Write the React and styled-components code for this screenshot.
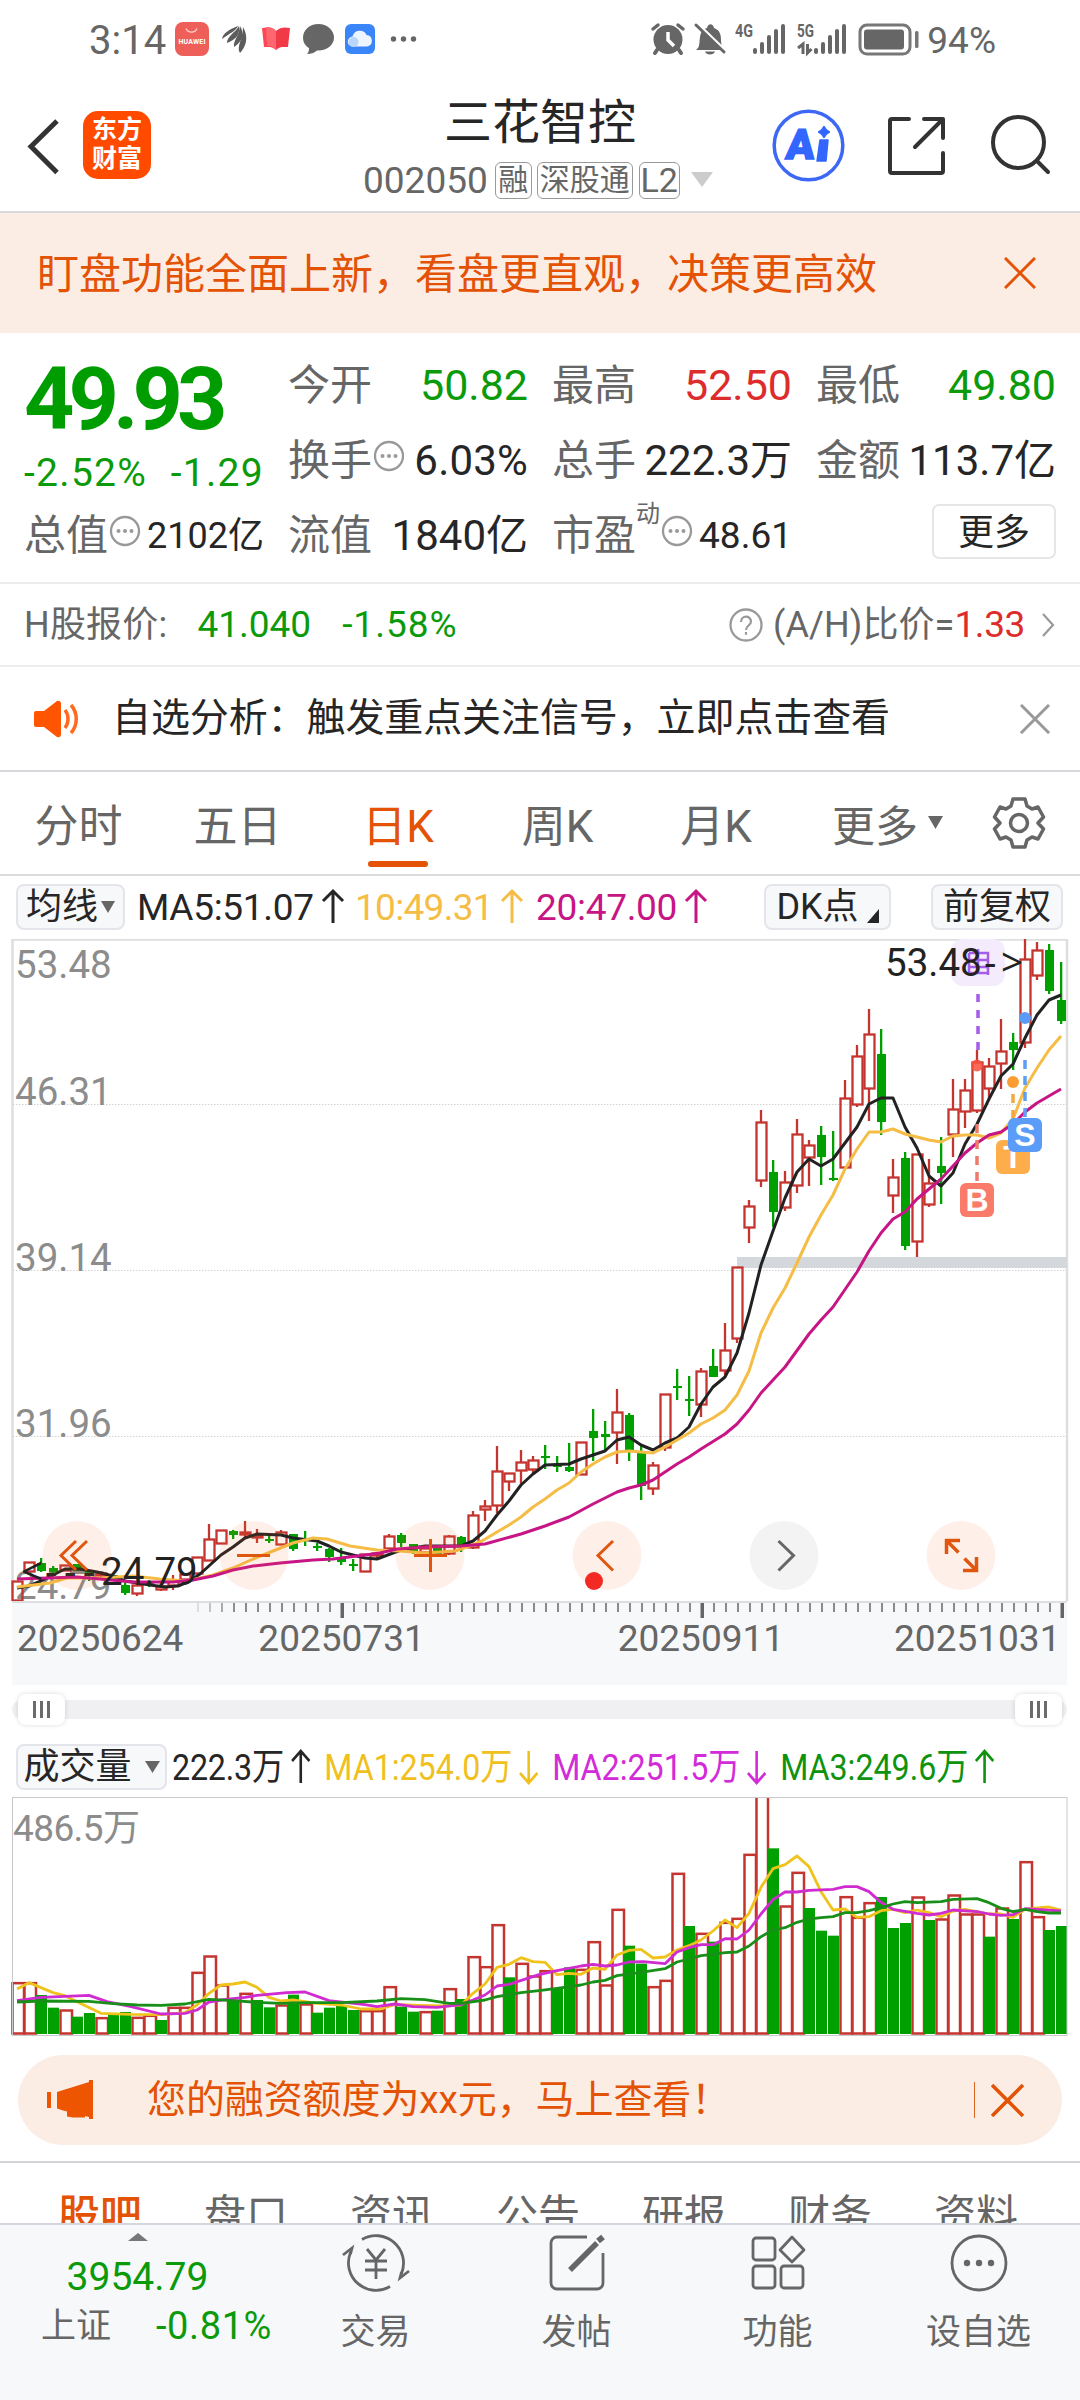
import React from 'react';
import styled, { createGlobalStyle } from 'styled-components';

const colors = {
  up: '#dd2c2c',
  down: '#0a9a0a',
  brand: '#e35205',
  text: '#262626',
  label: '#666666',
  muted: '#8c8c8c'
};

const GlobalStyle = createGlobalStyle`
  * {
    box-sizing: border-box;
  }
  body {
    margin: 0;
    background: #ffffff;
    font-family: Roboto, 'Noto Sans CJK SC', sans-serif;
    color: ${colors.text};
  }
  svg {
    display: block;
    flex: none;
  }
`;

const Page = styled.div`
  width: 1080px;
  height: 2400px;
  display: flex;
  flex-direction: column;
  overflow: hidden;
  background: #ffffff;
`;

const Text = styled.span`
  flex: none;
  white-space: nowrap;
  font-size: ${props => props.$size || 36}px;
  line-height: 1;
  font-weight: ${props => props.$weight || 400};
  color: ${props => props.$color || 'inherit'};
  letter-spacing: ${props => props.$track || 0}px;
  margin-left: ${props => props.$ml || 0}px;
  padding-top: ${props => props.$pt || 0}px;
`;

/* ---------- status bar ---------- */

const StatusBar = styled.div`
  height: 80px;
  flex: none;
  display: flex;
  justify-content: space-between;
  padding: 0 84px 0 89px;
  color: #666666;
`;

const StatusSide = styled.div`
  display: flex;
  align-items: center;
  height: 80px;
`;

const SignalBars = ({ x }) => (
  <g fill="#666">
    <rect x={x} y="38" width="4" height="6" rx="2" />
    <rect x={x + 7} y="32" width="4" height="12" rx="2" />
    <rect x={x + 14} y="25" width="4" height="19" rx="2" />
    <rect x={x + 21} y="19" width="4" height="25" rx="2" />
    <rect x={x + 28} y="14" width="4" height="30" rx="2" />
  </g>
);

const Status = () => (
  <StatusBar>
    <StatusSide>
      <Text $size={40} $pt={2}>3:14</Text>
      <svg width="256" height="80" viewBox="166 0 256 80">
        <rect x="175" y="22" width="34" height="34" rx="8" fill="#ee5f5a" />
        <path d="M186 28.5a6 6 0 0 0 11 0" fill="none" stroke="#fbd2cf" strokeWidth="1.3" />
        <text x="192" y="44" fontSize="7" fontWeight="700" fill="#fff" textAnchor="middle" textLength="27">
          HUAWEI
        </text>
        <g fill="#5c5c5c">
          <path d="M222 39c1-6 8-10 16-13-2 5-8 7-16 13z" />
          <path d="M227 43c0-7 8-10 12-17 1 8-2 13-12 17z" />
          <path d="M234 47c-1-6 5-11 6-21 5 8 2 16-6 21z" />
          <path d="M240 53c-4-6 3-14 3-26 6 10 3 20-3 26z" />
        </g>
        <path d="M262 28c5-1 10-1 14 3v19c-4-4-8-3-12-3z" fill="#ff4653" />
        <path d="M290 28c-5-1-10-1-14 3v19c4-4 8-3 12-3z" fill="#f03a47" />
        <path d="M266 27c5 0 8 1 10 4v19c-3-4-6-4-9-4z" fill="#ff6670" />
        <path
          d="M318.500 24c-9 0-15.500 6-15.500 13.500 0 5 2.500 8.500 6 10.500 0 3-.5 4.500-2 6 4 0 7.500-1 10-3.500 10 .5 17-5.500 17-13 0-7.500-7-13.500-15.500-13.500z"
          fill="#666"
        />
        <rect x="345" y="24" width="30" height="30" rx="6" fill="#3a85f7" />
        <path
          d="M353 46.500a5 5 0 0 1-.5-10 7.500 7.500 0 0 1 14-1.500 5.800 5.800 0 0 1 .5 11.500z"
          fill="#eef5ff"
        />
        <circle cx="353.500" cy="42" r="5" fill="#b9d6fd" />
        <g fill="#666">
          <circle cx="393.500" cy="39" r="2.700" />
          <circle cx="403.500" cy="39" r="2.700" />
          <circle cx="413.500" cy="39" r="2.700" />
        </g>
      </svg>
    </StatusSide>
    <StatusSide>
      <svg width="278" height="80" viewBox="648 0 278 80">
        <g fill="#666" stroke="#666" strokeLinecap="round">
          <circle cx="667" cy="39.500" r="14.500" stroke="none" />
          <path d="M652 29l5-4M682 29l-5-4" strokeWidth="3.500" fill="none" />
          <path d="M656 50l-2 3M678 50l2 3" strokeWidth="4" fill="none" />
        </g>
        <path d="M667 32v8l6 6" stroke="#fff" strokeWidth="3.500" fill="none" />
        <path
          d="M695 50c4-3 3-6 4-13 1-6 3-8 7-9 1-5 6-5 7 0 6 2 7 7 7 12 0 6 2 8 4 10z"
          fill="#666"
        />
        <path d="M704 51.500h10c-1 4-9 4-10 0z" fill="#666" />
        <path d="M694 22l32 31" stroke="#fff" strokeWidth="4" />
        <path d="M695 25l28 27" stroke="#666" strokeWidth="3" strokeLinecap="round" />
        <text x="734" y="37" fontSize="18" fontWeight="700" fill="#666" textLength="18" lengthAdjust="spacingAndGlyphs">
          4G
        </text>
        <g transform="translate(0 10)">
          <SignalBars x={752} />
          <SignalBars x={813} />
        </g>
        <text x="796" y="37" fontSize="18" fontWeight="700" fill="#666" textLength="17" lengthAdjust="spacingAndGlyphs">
          5G
        </text>
        <path d="M802 54V44l-5 4M806.500 44v9l4-4" stroke="#666" strokeWidth="3" fill="none" />
        <rect x="859" y="25" width="50" height="29" rx="7" fill="none" stroke="#777" strokeWidth="3" />
        <rect x="863" y="29.500" width="40" height="20" rx="3" fill="#666" />
        <rect x="914" y="31" width="3.500" height="17" rx="1.500" fill="#777" />
      </svg>
      <Text $size={37} $pt={1}>94%</Text>
    </StatusSide>
  </StatusBar>
);

/* ---------- header ---------- */

const HeaderBar = styled.header`
  height: 133px;
  flex: none;
  display: flex;
  border-bottom: 2px solid #d8d9dc;
`;

const HeaderLeft = styled.div`
  width: 363px;
  display: flex;
  align-items: flex-start;
  padding: 31px 0 0 24px;
`;

const AppLogo = styled.div`
  width: 68px;
  height: 68px;
  margin-left: 19px;
  border-radius: 15px;
  background: #ff4a00;
  color: #ffffff;
  font-weight: 700;
  font-size: 25px;
  line-height: 29px;
  text-align: center;
  padding-top: 4px;
`;

const HeaderTitle = styled.div`
  width: 354px;
  display: flex;
  flex-direction: column;
`;

const StockName = styled.h1`
  margin: 19px 0 0 81px;
  font-size: 48px;
  line-height: 48px;
  font-weight: 400;
`;

const CodeRow = styled.div`
  display: flex;
  align-items: center;
  height: 38px;
  margin-top: 14px;
  color: ${colors.label};
`;

const Tag = styled.span`
  height: 37px;
  margin-left: ${props => props.$ml || 5}px;
  width: ${props => props.$w}px;
  border: 1.5px solid #999999;
  border-radius: 6px;
  font-size: ${props => props.$size || 30}px;
  line-height: 34px;
  text-align: center;
  white-space: nowrap;
`;

const HeaderIcons = styled.div`
  display: flex;
  align-items: flex-start;
`;

const Header = () => (
  <HeaderBar>
    <HeaderLeft>
      <svg width="40" height="70" viewBox="24 110 40 70">
        <path d="M57 120L31 145.500l26 26" fill="none" stroke="#333" strokeWidth="5" />
      </svg>
      <AppLogo>
        东方
        <br />
        财富
      </AppLogo>
    </HeaderLeft>
    <HeaderTitle>
      <StockName>三花智控</StockName>
      <CodeRow>
        <Text $size={37}>002050</Text>
        <Tag $w={37} $ml={7}>融</Tag>
        <Tag $w={96}>深股通</Tag>
        <Tag $w={41} $ml={6} $size={34}>L2</Tag>
        <svg width="34" height="38" viewBox="0 0 34 38">
          <path d="M11 11h22L22 26z" fill="#ccc" />
        </svg>
      </CodeRow>
    </HeaderTitle>
    <HeaderIcons>
      <svg width="340" height="130" viewBox="717 80 340 130">
        <circle cx="808.500" cy="145.500" r="34.300" fill="#fff" stroke="#3d68f5" strokeWidth="3.500" />
        <text
          x="785"
          y="159"
          fontSize="42"
          fontWeight="900"
          fill="#3366ff"
          stroke="#3366ff"
          strokeWidth="1.500"
          transform="translate(14 0) skewX(-5)"
        >
          A
        </text>
        <path d="M820 140h8l-2 21h-9z" fill="#3366ff" stroke="#3366ff" strokeWidth="1.500" strokeLinejoin="round" />
        <path d="M824 126l2.500 3.500 3.500 2.500-3.500 2.500-2.500 3.500-2.500-3.500-3.500-2.500 3.500-2.500z" fill="#3366ff" stroke="#3366ff" />
        <g fill="none" stroke="#333" strokeWidth="4" strokeLinecap="round" strokeLinejoin="round">
          <path d="M909 119h-17a2 2 0 0 0-2 2v50a2 2 0 0 0 2 2h49a2 2 0 0 0 2-2v-18" />
          <path d="M924 119h19v19M942 120l-27 27" />
          <circle cx="1018.500" cy="142.500" r="25.500" />
          <path d="M1037 161l11 11" />
        </g>
      </svg>
    </HeaderIcons>
  </HeaderBar>
);

const Cross = ({ size, color, width = 3.5 }) => (
  <svg width={size} height={size} viewBox="0 0 32 32">
    <path d="M1 1l30 30M31 1L1 31" stroke={color} strokeWidth={width} fill="none" />
  </svg>
);

const Banner = styled.div`
  height: 120px;
  flex: none;
  display: flex;
  align-items: center;
  justify-content: space-between;
  padding: 0 44px 0 37px;
  background: #fcede4;
  color: ${colors.brand};
`;

/* ---------- quote ---------- */

const QuoteGrid = styled.section`
  height: 251px;
  flex: none;
  display: grid;
  grid-template-columns: repeat(4, 240px);
  grid-template-rows: repeat(3, 75px);
  column-gap: 24px;
  padding: 15px 0 0 24px;
  border-bottom: 2px solid #ececee;
`;

const PriceCell = styled.div`
  grid-row: span 2;
  padding-top: 7px;
`;

const Price = styled.div`
  font-size: 88px;
  line-height: 88px;
  font-weight: 700;
  letter-spacing: -6px;
  color: #009d00;
`;

const Change = styled.div`
  display: flex;
  justify-content: space-between;
  margin-top: 11px;
  color: ${colors.down};
`;

const Cell = styled.div`
  display: flex;
  align-items: center;
  height: 75px;
`;

const CellLabel = styled.span`
  font-size: 42px;
  line-height: 1;
  color: ${colors.label};
  white-space: nowrap;
`;

const CellValue = styled.span`
  margin-left: auto;
  font-size: ${props => props.$size || 43}px;
  line-height: 1;
  letter-spacing: ${props => props.$track || 0}px;
  white-space: nowrap;
  color: ${props => props.$color || '#262626'};
`;

const Superscript = styled.sup`
  align-self: flex-start;
  margin-top: 4px;
  font-size: 24px;
  line-height: 1;
  color: ${colors.label};
`;

const MoreButton = styled.button`
  width: 124px;
  height: 55px;
  margin: 0 0 8px auto;
  padding: 2px 0 0;
  background: #ffffff;
  border: 2px solid #e6e6e8;
  border-radius: 7px;
  font-family: inherit;
  font-size: 36px;
  line-height: 1;
  color: ${colors.text};
`;

const InfoDots = () => (
  <svg width="34" height="44" viewBox="0 0 34 44">
    <circle cx="17" cy="17" r="14" fill="none" stroke="#999" strokeWidth="2.300" />
    <circle cx="10.500" cy="17" r="2" fill="#999" />
    <circle cx="17" cy="17" r="2" fill="#999" />
    <circle cx="23.500" cy="17" r="2" fill="#999" />
  </svg>
);

const Quote = () => (
  <QuoteGrid>
    <PriceCell>
      <Price>49.93</Price>
      <Change>
        <Text $size={39} $track={1.3}>-2.52%</Text>
        <Text $size={39} $track={1.3}>-1.29</Text>
      </Change>
    </PriceCell>
    <Cell>
      <CellLabel>今开</CellLabel>
      <CellValue $color={colors.down}>50.82</CellValue>
    </Cell>
    <Cell>
      <CellLabel>最高</CellLabel>
      <CellValue $color={colors.up}>52.50</CellValue>
    </Cell>
    <Cell>
      <CellLabel>最低</CellLabel>
      <CellValue $color={colors.down}>49.80</CellValue>
    </Cell>
    <Cell>
      <CellLabel>换手</CellLabel>
      <InfoDots />
      <CellValue $size={42} $track={0.2}>6.03%</CellValue>
    </Cell>
    <Cell>
      <CellLabel>总手</CellLabel>
      <CellValue $size={42}>222.3万</CellValue>
    </Cell>
    <Cell>
      <CellLabel>金额</CellLabel>
      <CellValue $size={42}>113.7亿</CellValue>
    </Cell>
    <Cell>
      <CellLabel>总值</CellLabel>
      <InfoDots />
      <CellValue $size={36}>2102亿</CellValue>
    </Cell>
    <Cell>
      <CellLabel>流值</CellLabel>
      <CellValue $size={42}>1840亿</CellValue>
    </Cell>
    <Cell>
      <CellLabel>市盈</CellLabel>
      <Superscript>动</Superscript>
      <InfoDots />
      <CellValue $size={37}>48.61</CellValue>
    </Cell>
    <Cell>
      <MoreButton>更多</MoreButton>
    </Cell>
  </QuoteGrid>
);

const HShareRow = styled.div`
  height: 83px;
  flex: none;
  display: flex;
  align-items: center;
  padding: 0 24px;
  color: ${colors.label};
  border-bottom: 2px solid #ececee;
`;

const HShareRight = styled.div`
  display: flex;
  align-items: center;
  margin-left: auto;
`;

const HShare = () => (
  <HShareRow>
    <Text $track={0.2}>H股报价:</Text>
    <Text $color={colors.down} $size={37} $ml={30}>41.040</Text>
    <Text $color={colors.down} $size={37} $ml={31} $track={1}>-1.58%</Text>
    <HShareRight>
      <svg width="34" height="34" viewBox="0 0 34 34">
        <circle cx="17" cy="17" r="15.500" fill="none" stroke="#999" strokeWidth="2.300" />
        <path d="M12 14c0-7 10-7 10-.5 0 4-5 4-5 8.500M17 24v2.800" fill="none" stroke="#999" strokeWidth="2.200" />
      </svg>
      <Text $ml={10} $track={0.1}>(A/H)比价=</Text>
      <Text $color={colors.up} $size={37} $track={-0.4}>1.33</Text>
      <svg width="31" height="30" viewBox="0 0 31 30">
        <path d="M18 4l10 11-10 11" fill="none" stroke="#999" strokeWidth="2.200" />
      </svg>
    </HShareRight>
  </HShareRow>
);

const AnalysisRow = styled.div`
  height: 105px;
  flex: none;
  display: flex;
  align-items: center;
  padding: 0 30px 0 32px;
  border-bottom: 2px solid #d8d9dc;
`;

const AnalysisClose = styled.div`
  margin-left: auto;
`;

const Analysis = () => (
  <AnalysisRow>
    <svg width="50" height="44" viewBox="32 696 50 44">
      <path d="M36 710h8l13-10a3 3 0 0 1 4 2v32a3 3 0 0 1-4 2l-13-10h-8a2 2 0 0 1-2-2v-12a2 2 0 0 1 2-2z" fill="#ff5500" />
      <path d="M65 709c4 5 4 13 0 18M71 704c7 8 7 20 0 28" fill="none" stroke="#ff6a1f" strokeWidth="3.500" />
    </svg>
    <Text $size={39} $ml={30} $track={-0.1}>自选分析：触发重点关注信号，立即点击查看</Text>
    <AnalysisClose>
      <Cross size={30} color="#999" width={3.2} />
    </AnalysisClose>
  </AnalysisRow>
);

/* ---------- period tabs ---------- */

const PeriodTabs = styled.nav`
  height: 104px;
  flex: none;
  display: flex;
  border-bottom: 2px solid #dcdcdf;
`;

const PeriodTab = styled.div`
  width: ${props => props.$w}px;
  display: flex;
  flex-direction: column;
  align-items: center;
  padding-top: 33px;
  font-size: 44px;
  line-height: 44px;
  color: ${props => (props.$active ? colors.brand : colors.label)};
  &::after {
    content: '';
    width: 60px;
    height: 6px;
    margin-top: 12px;
    border-radius: 3px;
    background: ${props => (props.$active ? colors.brand : 'transparent')};
  }
`;

const MoreTab = styled.div`
  display: flex;
  padding: 33px 0 0 37px;
  font-size: 43px;
  line-height: 44px;
  color: ${colors.label};
`;

const SettingsIcon = styled.svg`
  margin-left: 45px;
`;

const Periods = () => (
  <PeriodTabs>
    <PeriodTab $w={157}>分时</PeriodTab>
    <PeriodTab $w={161}>五日</PeriodTab>
    <PeriodTab $w={160} $active>日K</PeriodTab>
    <PeriodTab $w={159}>周K</PeriodTab>
    <PeriodTab $w={158}>月K</PeriodTab>
    <MoreTab>
      更多
      <svg width="25" height="44" viewBox="0 0 25 44">
        <path d="M10 11h15L17.500 24z" fill="#666" />
      </svg>
    </MoreTab>
    <SettingsIcon width="60" height="100" viewBox="-31 -51 60 100">
      <path
        d="M-6 -24H6L8 -17L13 -14L19 -16L24.500 -6L19 0L24.500 6L19 16L13 14L8 17L6 24H-6L-8 17L-13 14L-19 16L-24.500 6L-19 0L-24.500 -6L-19 -16L-13 -14L-8 -17Z"
        fill="none"
        stroke="#666"
        strokeWidth="3.500"
        strokeLinejoin="round"
      />
      <circle r="8.500" fill="none" stroke="#666" strokeWidth="3.500" />
    </SettingsIcon>
  </PeriodTabs>
);

/* ---------- legends ---------- */

const LegendRow = styled.div`
  height: 63px;
  flex: none;
  display: flex;
  align-items: center;
  padding: 0 16px 1px;
`;

const Chip = styled.div`
  width: ${props => props.$w}px;
  height: 46px;
  flex: none;
  display: flex;
  align-items: center;
  justify-content: center;
  gap: ${props => props.$gap || 4}px;
  margin-left: ${props => props.$ml || 0}px;
  border: 2px solid #e3e5ea;
  border-radius: 8px;
  background: #f7f8fa;
  font-size: 36px;
  line-height: 1;
  white-space: nowrap;
`;

const Legend = styled.span`
  width: ${props => props.$w}px;
  flex: none;
  display: flex;
  align-items: center;
  margin-left: ${props => props.$ml || 0}px;
  font-size: 37px;
  line-height: 1;
  letter-spacing: ${props => props.$track || 0}px;
  white-space: nowrap;
  color: ${props => props.$color};
`;

const Arrow = ({ down }) => (
  <svg width="38" height="40" viewBox="1 0 38 40">
    <path
      d={down ? 'M20 4v32M10 26l10 10 10-10' : 'M20 36V4M10 14L20 4l10 10'}
      fill="none"
      stroke="currentColor"
      strokeWidth="3"
    />
  </svg>
);

const Caret = ({ size = 14 }) => (
  <svg width={size} height="12" viewBox="0 0 14 12" preserveAspectRatio="none">
    <path d="M0 0h14L7 12z" fill="#666" />
  </svg>
);

const PriceLegend = () => (
  <LegendRow>
    <Chip $w={109} $gap={3}>
      均线
      <Caret />
    </Chip>
    <Legend $w={218} $ml={12} $color="#262626" $track={-0.3}>
      MA5:51.07
      <Arrow />
    </Legend>
    <Legend $w={181} $color="#f5bd45" $track={-0.7}>
      10:49.31
      <Arrow />
    </Legend>
    <Legend $w={228} $color="#c71585" $track={-0.3}>
      20:47.00
      <Arrow />
    </Legend>
    <Chip $w={127} $gap={8}>
      DK点
      <svg width="12" height="40" viewBox="0 0 12 40">
        <path d="M12 22v14H0z" fill="#262626" />
      </svg>
    </Chip>
    <Chip $w={132} $ml={40}>前复权</Chip>
  </LegendRow>
);

/* ---------- candlestick chart ---------- */

const RISE = '#c53530';
const FALL = '#00a000';
const dayX = i => 17 + i * 12;

// [direction, high, body top, body bottom, low]
const candles = [
  ['R', 1581, 1581, 1601, 1601],
  ['R', 1562, 1562, 1572, 1572],
  ['G', 1558, 1563, 1571, 1572],
  ['G', 1566, 1568, 1572, 1574],
  ['R', 1565, 1565, 1571, 1571],
  ['G', 1564, 1564, 1571, 1571],
  ['G', 1570, 1571, 1575, 1581],
  ['R', 1573, 1573, 1576, 1577],
  ['G', 1574, 1575, 1579, 1580],
  ['G', 1583, 1585, 1593, 1595],
  ['R', 1583, 1585, 1594, 1596],
  ['G', 1580, 1582, 1584, 1587],
  ['R', 1584, 1586, 1590, 1591],
  ['R', 1575, 1580, 1586, 1590],
  ['R', 1574, 1574, 1580, 1580],
  ['R', 1557, 1557, 1574, 1574],
  ['R', 1524, 1539, 1561, 1561],
  ['R', 1530, 1530, 1544, 1544],
  ['G', 1530, 1531, 1535, 1539],
  ['R', 1521, 1532, 1535, 1538],
  ['R', 1529, 1535, 1538, 1543],
  ['G', 1534, 1539, 1541, 1543],
  ['R', 1530, 1532, 1545, 1545],
  ['G', 1534, 1534, 1549, 1551],
  ['G', 1531, 1539, 1541, 1546],
  ['G', 1543, 1546, 1548, 1551],
  ['G', 1548, 1549, 1557, 1562],
  ['G', 1548, 1559, 1562, 1565],
  ['G', 1559, 1564, 1566, 1571],
  ['R', 1554, 1554, 1572, 1572],
  ['R', 1552, 1553, 1556, 1558],
  ['R', 1534, 1536, 1549, 1549],
  ['G', 1533, 1535, 1543, 1547],
  ['G', 1544, 1544, 1553, 1554],
  ['R', 1548, 1548, 1553, 1553],
  ['G', 1547, 1547, 1554, 1554],
  ['R', 1535, 1536, 1554, 1555],
  ['G', 1536, 1537, 1547, 1552],
  ['R', 1511, 1515, 1548, 1549],
  ['R', 1500, 1506, 1510, 1521],
  ['R', 1446, 1471, 1506, 1513],
  ['R', 1473, 1473, 1482, 1491],
  ['R', 1450, 1462, 1471, 1484],
  ['R', 1456, 1460, 1470, 1474],
  ['G', 1445, 1456, 1458, 1469],
  ['G', 1456, 1465, 1467, 1472],
  ['G', 1443, 1467, 1471, 1472],
  ['R', 1442, 1442, 1475, 1475],
  ['G', 1409, 1431, 1438, 1461],
  ['G', 1421, 1434, 1437, 1451],
  ['R', 1389, 1412, 1433, 1464],
  ['G', 1413, 1415, 1452, 1461],
  ['G', 1446, 1453, 1486, 1500],
  ['R', 1462, 1465, 1489, 1495],
  ['R', 1394, 1394, 1448, 1451],
  ['G', 1369, 1386, 1388, 1400],
  ['G', 1376, 1399, 1401, 1416],
  ['R', 1368, 1371, 1405, 1417],
  ['G', 1349, 1366, 1377, 1377],
  ['R', 1323, 1350, 1371, 1375],
  ['R', 1267, 1267, 1339, 1343],
  ['R', 1200, 1206, 1228, 1243],
  ['R', 1110, 1122, 1181, 1187],
  ['G', 1160, 1172, 1212, 1227],
  ['R', 1171, 1182, 1208, 1211],
  ['R', 1119, 1134, 1186, 1193],
  ['R', 1140, 1145, 1158, 1186],
  ['G', 1126, 1135, 1157, 1185],
  ['G', 1131, 1178, 1180, 1181],
  ['R', 1080, 1098, 1168, 1168],
  ['R', 1045, 1056, 1105, 1107],
  ['R', 1009, 1034, 1089, 1121],
  ['G', 1029, 1054, 1122, 1135],
  ['R', 1159, 1177, 1196, 1213],
  ['G', 1152, 1158, 1246, 1250],
  ['R', 1154, 1154, 1242, 1257],
  ['R', 1159, 1183, 1205, 1207],
  ['G', 1137, 1166, 1173, 1204],
  ['R', 1079, 1109, 1135, 1157],
  ['R', 1079, 1090, 1112, 1128],
  ['R', 1050, 1062, 1111, 1113],
  ['R', 1058, 1066, 1089, 1100],
  ['R', 1019, 1051, 1064, 1089],
  ['G', 1033, 1042, 1050, 1070],
  ['R', 939, 959, 1043, 1048],
  ['R', 942, 950, 976, 980],
  ['G', 944, 950, 991, 994],
  ['G', 962, 1000, 1021, 1024]
];

const ma5 =
  '17,1588 29,1586 41,1581 53,1575 65,1569 80,1569 97,1572 113,1576 125,1581 150,1585 165,1587 178,1586 190,1581 200,1574 210,1565 221,1555 233,1547 245,1538 257,1534 281,1535 293,1538 317,1541 329,1546 341,1552 365,1558 377,1559 401,1550 425,1546 461,1546 473,1541 485,1531 497,1515 509,1501 521,1485 533,1474 545,1465 569,1464 581,1459 605,1451 617,1440 629,1437 641,1445 653,1450 665,1443 677,1438 689,1427 701,1404 713,1387 725,1377 737,1353 749,1313 761,1265 773,1231 785,1198 797,1172 809,1159 821,1166 833,1159 845,1143 857,1127 869,1104 881,1098 893,1098 905,1127 917,1148 929,1176 941,1186 953,1173 965,1144 977,1124 989,1099 1001,1076 1013,1064 1025,1038 1037,1015 1049,1000 1061,995';

const ma10 =
  '17,1587 50,1583 67,1578 100,1578 133,1576 160,1579 187,1581 213,1575 233,1568 253,1559 273,1551 293,1543 313,1538 327,1539 350,1546 377,1550 400,1551 425,1553 455,1551 467,1547 482,1541 497,1532 509,1525 521,1517 533,1507 545,1499 557,1490 569,1483 581,1472 593,1464 605,1457 617,1452 629,1451 641,1452 653,1453 665,1447 689,1433 701,1424 713,1418 725,1410 737,1395 749,1371 761,1333 773,1308 785,1288 797,1263 809,1237 821,1215 833,1195 845,1169 857,1149 869,1132 881,1132 893,1129 905,1134 929,1140 941,1142 953,1136 965,1135 977,1135 989,1138 1001,1133 1013,1119 1025,1088 1037,1068 1049,1050 1061,1036';

const ma20 =
  '17,1579 77,1577 100,1579 133,1582 173,1582 193,1580 213,1576 233,1570 253,1566 280,1563 313,1560 333,1559 365,1555 380,1553 397,1549 425,1547 461,1546 485,1544 521,1534 545,1526 569,1517 593,1504 617,1492 629,1488 641,1485 653,1480 677,1464 689,1457 701,1449 725,1434 737,1424 749,1410 761,1393 773,1380 785,1367 809,1334 821,1320 833,1307 857,1272 869,1251 881,1233 893,1219 905,1212 917,1199 941,1179 965,1153 977,1143 989,1135 1001,1132 1013,1124 1025,1112 1037,1103 1049,1096 1061,1089';

const Candle = ({ x, data: [dir, high, top, bottom, low] }) => {
  if (dir === 'G') {
    return (
      <g fill={FALL}>
        <rect x={x - 1} y={high} width="2.300" height={low - high} />
        <rect x={x - 4} y={top} width="9" height={bottom - top} />
      </g>
    );
  }
  return (
    <g fill="none" stroke={RISE} strokeWidth="2.300">
      <path d={`M${x} ${high}V${top}M${x} ${bottom}V${low}`} />
      <rect x={x - 4.5} y={top + 0.5} width="10" height={Math.max(bottom - top - 1, 1)} />
    </g>
  );
};

const Marker = ({ x, y, color, children }) => (
  <g>
    <rect x={x} y={y} width="34" height="34" rx="6" fill={color} />
    <text x={x + 17} y={y + 28} fontSize="32" fontWeight="700" fill="#fff" textAnchor="middle" fontFamily="Liberation Sans">
      {children}
    </text>
  </g>
);

const RoundButton = ({ x, muted, children }) => (
  <g fill="none" stroke={muted ? '#666' : '#e0560f'} strokeWidth="3">
    <circle cx={x} cy="1555.500" r="34.500" fill={muted ? '#f3f3f3' : 'rgba(245, 110, 40, 0.1)'} stroke="none" />
    {children}
  </g>
);

const PriceChart = () => (
  <svg width="1080" height="662" viewBox="0 939 1080 662">
    <path d="M12.500 1602V939.500H1067V1602" fill="none" stroke="#dedee0" strokeWidth="2.500" />
    {[1104.5, 1270.5, 1436.5].map(y => (
      <path key={y} d={`M13 ${y}H1067`} stroke="#d2d2d2" strokeDasharray="1.500 1.500" />
    ))}
    <rect x="737" y="1257" width="330" height="11" fill="#d4d7dc" />
    <g fontSize="38.500" fill="#8c8c8c">
      <text x="15" y="978">53.48</text>
      <text x="15" y="1105">46.31</text>
      <text x="15" y="1271">39.14</text>
      <text x="15" y="1437">31.96</text>
      <text x="15" y="1599">24.79</text>
    </g>
    <rect x="951" y="939" width="54" height="47" rx="12" fill="#f4ebfd" />
    <path d="M969 953h19v22M969 953v20h19M969 960h19M969 967h19M978 949v24" fill="none" stroke="#a55ce8" strokeWidth="2.500" />
    <path d="M978 986V1050" stroke="#a55ce8" strokeWidth="3.500" strokeDasharray="8 8" strokeDashoffset="-8" />
    {candles.map((candle, i) => (
      <Candle key={i} x={dayX(i)} data={candle} />
    ))}
    <g fill="none" strokeWidth="3" strokeLinejoin="round">
      <polyline points={ma5} stroke="#222" />
      <polyline points={ma10} stroke="#f5bd45" />
      <polyline points={ma20} stroke="#c71585" />
    </g>
    <g strokeWidth="3.500" strokeDasharray="9 7">
      <path d="M977 1124V1182" stroke="#ee7a6c" />
      <path d="M1013 1094V1140" stroke="#f5a742" />
      <path d="M1025 1060V1118" stroke="#5c9df5" />
    </g>
    <circle cx="977" cy="1065.500" r="6" fill="#f9503c" fillOpacity="0.850" />
    <circle cx="1013" cy="1082" r="6" fill="#fa9d32" />
    <circle cx="1025" cy="1018" r="6" fill="#5a9bf8" />
    <Marker x={960} y={1183} color="#fb7b6b">B</Marker>
    <Marker x={996} y={1140} color="#fdae4b">T</Marker>
    <Marker x={1008} y={1118} color="#5b9cf8">S</Marker>
    <g fontSize="38.500" fill="#222">
      <text x="885" y="976">53.48</text>
      <text x="984 1001" y="976" fontFamily="Noto Sans">-&gt;</text>
      <text x="21 45 64 83" y="1585" fontFamily="Noto Sans">&lt;---</text>
      <text x="101" y="1585">24.79</text>
    </g>
    <RoundButton x={77}>
      <path d="M76 1541l-15 14.500 15 14.500M87 1541l-15 14.500 15 14.500" />
    </RoundButton>
    <RoundButton x={254}>
      <path d="M237 1555.500h33" />
    </RoundButton>
    <RoundButton x={430}>
      <path d="M414 1555.500h33M430.500 1539v33" />
    </RoundButton>
    <RoundButton x={607}>
      <path d="M613 1541l-15 14.500 15 15" />
    </RoundButton>
    <RoundButton x={784} muted>
      <path d="M778.500 1541l15 14.500-15 15" />
    </RoundButton>
    <RoundButton x={961}>
      <path d="M946.500 1554v-13.500H960M947 1541l11.500 11.500M963 1570.500h13.500V1557M976 1570l-11.500-11.500" strokeWidth="3.500" />
    </RoundButton>
    <circle cx="594" cy="1581" r="9" fill="#f32a24" />
  </svg>
);

const DateAxis = styled.div`
  width: 1055px;
  height: 84px;
  flex: none;
  margin-left: 12px;
  background: #f7f8fa;
  border-top: 2px solid #dedee0;
`;

const DateRow = styled.div`
  display: flex;
  padding-left: 5px;
  color: ${colors.label};
`;

const tickOpacity = x => Math.max(0, Math.min(1, (x - 186) / 50));

const Dates = () => (
  <DateAxis>
    <svg width="1055" height="17" viewBox="12 0 1055 17">
      {candles.map((_, i) => {
        const x = 18 + i * 12;
        const major = [27, 57, 87].includes(i);
        return (
          <rect
            key={i}
            x={x - (major ? 1.5 : 1)}
            y="0"
            width={major ? 3.5 : 2}
            height={major ? 15 : 9}
            fill={major ? '#666' : '#8a8a8a'}
            opacity={tickOpacity(x)}
          />
        );
      })}
    </svg>
    <DateRow>
      <Text $size={37}>20250624</Text>
      <Text $size={37} $ml={75}>20250731</Text>
      <Text $size={37} $ml={193}>20250911</Text>
      <Text $size={37} $ml={110}>20251031</Text>
    </DateRow>
  </DateAxis>
);

/* ---------- range slider ---------- */

const SliderArea = styled.div`
  height: 55px;
  flex: none;
  display: flex;
  align-items: center;
  padding: 0 13px 6px 12px;
`;

const Track = styled.div`
  width: 1055px;
  height: 19px;
  display: flex;
  align-items: center;
  justify-content: space-between;
  padding: 0 5px 0 6px;
  border-radius: 10px;
  background: #f0f0f3;
`;

const Handle = styled.div`
  width: 47px;
  height: 31px;
  display: flex;
  align-items: center;
  justify-content: center;
  gap: 4.500px;
  border-radius: 8px;
  background: #ffffff;
  box-shadow: 0 0 5px rgba(0, 0, 0, 0.14);
  i {
    width: 2.500px;
    height: 17px;
    background: #6b6b6b;
  }
`;

const RangeSlider = () => (
  <SliderArea>
    <Track>
      <Handle>
        <i />
        <i />
        <i />
      </Handle>
      <Handle>
        <i />
        <i />
        <i />
      </Handle>
    </Track>
  </SliderArea>
);

/* ---------- volume ---------- */

const VolumeRow = styled(LegendRow)`
  height: 57px;
  padding-bottom: 3px;
`;

// the figures are set narrower than the chip beside them
const Figures = styled.div`
  display: flex;
  margin-left: 5px;
  transform: scaleX(0.87);
  transform-origin: left center;
`;

const VolumeLegend = () => (
  <VolumeRow>
    <Chip $w={151} $gap={13}>
      成交量
      <Caret size={15} />
    </Chip>
    <Figures>
      <Legend $w={175} $color="#262626" $track={-0.2}>
        222.3万
        <Arrow />
      </Legend>
      <Legend $w={262} $color="#f0c01c">
        MA1:254.0万
        <Arrow down />
      </Legend>
      <Legend $w={262} $color="#d22bd8">
        MA2:251.5万
        <Arrow down />
      </Legend>
      <Legend $w={262} $color="#0f930f">
        MA3:249.6万
        <Arrow />
      </Legend>
    </Figures>
  </VolumeRow>
);

// bar tops in thirds of a pixel, counted down from the slider above
const volumes =
  'R908 R908 G945 G983 R990 G1010 G999 R1013 G1003 G996 R1012 R1006 G1020 R982 R982 R877 R828 R915 G960 R940 G960 G982 R975 G944 R972 G998 G983 G975 G990 R992 R992 R920 G980 G995 R995 G992 R926 G957 R830 R860 R734 G892 R850 R888 R872 G924 G862 R868 R785 R915 R688 G797 G851 R920 R901 R580 G738 R760 G785 R727 R715 R523 R346 G505 R678 R577 G684 G752 G767 R650 R712 R668 G651 G744 G729 R651 G720 R717 R645 R702 R702 G770 R684 G717 R545 R710 G750 G738'.split(
    ' '
  );

// [day, level]
const volumeMa1 = [
  [0, 927], [1, 908], [3, 938], [4, 947], [5, 965], [7, 1000], [9.5, 1003], [12, 1004], [14, 998], [15, 975], [16, 940],
  [17, 915], [18, 912], [19, 906], [20, 922], [21, 952], [22, 963], [23, 960], [25, 970], [27, 975], [28.7, 987],
  [30.3, 987], [31.5, 973], [33.5, 976], [35.5, 978], [37, 975], [38, 940], [39, 912], [40, 862], [41, 853], [42, 833],
  [43, 845], [44, 847], [45, 884], [46, 880], [47, 883], [48, 864], [49, 868], [50, 825], [51, 811], [52, 808],
  [53, 834], [54, 831], [55, 810], [56, 797], [57, 780], [58, 753], [59, 720], [60, 743], [61, 700], [62, 622],
  [63, 566], [64, 554], [65, 528], [66, 560], [67, 635], [68, 690], [69, 687], [70, 712], [71, 710], [72, 692],
  [73, 688], [74, 698], [75, 690], [76, 698], [77, 710], [78, 693], [79, 688], [80, 695], [81, 702], [82, 702],
  [83, 712], [84, 688], [85, 684], [86, 681], [87, 690]
];

const volumeMa2 = [
  [0, 962], [2, 952], [4, 949], [6, 946], [7.5, 965], [9.5, 980], [12, 1002], [14, 1000], [15, 990], [16, 966],
  [17, 960], [19, 952], [20, 946], [22.500, 938], [24, 936], [26, 962], [29, 974], [30, 980], [31.5, 972], [33, 980],
  [35, 982], [37, 974], [38, 960], [39, 945], [40, 918], [41, 913], [43.5, 884], [45, 872], [47, 858], [48, 853],
  [49, 858], [50, 855], [51, 846], [52.2, 845], [54, 851], [55, 816], [56, 803], [57, 794], [58, 794], [59, 776],
  [60, 777], [61, 750], [62, 702], [63, 659], [64, 636], [65, 636], [66, 631], [68, 628], [69, 620], [70, 620],
  [71, 635], [72, 667], [73, 688], [75, 700], [76, 705], [77, 700], [78, 690], [80, 695], [81, 702], [82, 706],
  [83, 704], [84, 686], [87, 693]
];

const volumeMa3 = [
  [0, 966], [2, 963], [6, 964], [8, 971], [10, 975], [12, 976], [14, 972], [16, 958], [18, 962], [20, 967], [22, 970],
  [24, 968], [27, 968], [30, 963], [32, 956], [34, 959], [36, 970], [37, 970], [39, 960], [40, 950], [42, 938],
  [43.5, 932], [45, 925], [47, 915], [48, 906], [49, 901], [50, 887], [52, 877], [54, 866], [55, 846], [56, 837],
  [57, 827], [58, 823], [59, 818], [60, 816], [61, 798], [62, 770], [63, 750], [64, 743], [65, 727], [66, 717],
  [67, 713], [68, 710], [69, 698], [70, 698], [71, 692], [72, 683], [73, 672], [74, 665], [75, 668], [77, 665],
  [78, 658], [80, 656], [81, 668], [82, 685], [83, 695], [84, 688], [85, 695], [86, 699], [87, 699]
];

const levelY = level => 1680 + level / 3;
const toPoints = line => line.map(([day, level]) => `${dayX(day)},${levelY(level)}`).join(' ');

const VolumeChart = () => (
  <svg width="1080" height="240" viewBox="0 1797 1080 240">
    <text x="13" y="1841" fontSize="37" fill="#8c8c8c" textLength="127">
      486.5万
    </text>
    {volumes.map((bar, i) => {
      const x = dayX(i);
      const y = levelY(Number(bar.slice(1)));
      return bar[0] === 'G' ? (
        <rect key={i} x={x - 5} y={y} width="11" height={2034 - y} fill={FALL} />
      ) : (
        <rect key={i} x={x - 4.5} y={y + 0.5} width="11.500" height={2033 - y} fill="#fff" stroke={RISE} strokeWidth="2.500" />
      );
    })}
    <rect x="12.500" y="1797.500" width="1054.500" height="238" fill="none" stroke="#c9c9cb" />
    <g fill="none" strokeWidth="2.800" strokeLinejoin="round">
      <polyline points={toPoints(volumeMa1)} stroke="#efc21c" />
      <polyline points={toPoints(volumeMa2)} stroke="#d02bd0" />
      <polyline points={toPoints(volumeMa3)} stroke="#189018" />
    </g>
  </svg>
);

/* ---------- bottom ---------- */

const NoticeArea = styled.div`
  height: 126px;
  flex: none;
  padding: 18px 18px 0;
  border-bottom: 2px solid #d3d4d8;
`;

const Notice = styled.div`
  height: 90px;
  display: flex;
  align-items: center;
  padding: 0 38px 0 28px;
  border-radius: 45px;
  background: #fcede4;
  color: ${colors.brand};
`;

const NoticeClose = styled.div`
  display: flex;
  align-items: center;
  height: 36px;
  margin-left: auto;
  padding-left: 16px;
  border-left: 1.500px solid #d9651f;
`;

const SectionTabs = styled.nav`
  height: 60px;
  flex: none;
  display: flex;
  padding: 29px 0 0 27px;
  overflow: hidden;
`;

const SectionTab = styled.div`
  width: 146px;
  flex: none;
  text-align: center;
  font-size: 42px;
  line-height: 48px;
  font-weight: ${props => (props.$active ? 500 : 400)};
  color: ${props => (props.$active ? colors.brand : colors.label)};
`;

const BottomNav = styled.footer`
  height: 177px;
  flex: none;
  display: flex;
  background: #f7f8fa;
  border-top: 2px solid #d3d6dc;
`;

const IndexPanel = styled.div`
  width: 275px;
  display: flex;
  flex-direction: column;
  align-items: center;
  color: ${colors.down};
`;

const IndexPrice = styled.div`
  margin-top: 13px;
  font-size: 39px;
  line-height: 1;
`;

const IndexRow = styled.div`
  width: 275px;
  display: flex;
  align-items: center;
  margin-top: 10px;
  padding-left: 41px;
`;

const NavItem = styled.div`
  width: 201px;
  display: flex;
  flex-direction: column;
  align-items: center;
  font-size: 35px;
  line-height: 38px;
  color: ${colors.label};
`;

const NavIcon = ({ children }) => (
  <svg width="80" height="89" viewBox="-40 -38 80 89" fill="none" stroke="#666" strokeWidth="2.800">
    {children}
  </svg>
);

const sections = ['股吧', '盘口', '资讯', '公告', '研报', '财务', '资料'];

const App = () => (
  <>
    <GlobalStyle />
    <Page>
      <Status />
      <Header />
      <Banner>
        <Text $size={42} $pt={4}>盯盘功能全面上新，看盘更直观，决策更高效</Text>
        <Cross size={32} color={colors.brand} width={3} />
      </Banner>
      <Quote />
      <HShare />
      <Analysis />
      <Periods />
      <PriceLegend />
      <PriceChart />
      <Dates />
      <RangeSlider />
      <VolumeLegend />
      <VolumeChart />
      <NoticeArea>
        <Notice>
          <svg width="50" height="44" viewBox="46 2078 50 44">
            <path d="M49 2092v16" stroke="#ee5500" strokeWidth="4" />
            <path d="M57 2092l32-10v-2h4v39h-4v-2l-4-1v1.500h-12l-6-1v-5l-4-1-6-2z" fill="#ee5500" />
          </svg>
          <Text $size={39} $ml={51} $track={-0.1}>您的融资额度为xx元，马上查看！</Text>
          <NoticeClose>
            <Cross size={33} color={colors.brand} />
          </NoticeClose>
        </Notice>
      </NoticeArea>
      <SectionTabs>
        {sections.map((name, i) => (
          <SectionTab key={name} $active={i === 0}>
            {name}
          </SectionTab>
        ))}
      </SectionTabs>
      <BottomNav>
        <IndexPanel>
          <svg width="20" height="20" viewBox="0 0 20 20">
            <path d="M0 16L10 8l10 8z" fill="#777" />
          </svg>
          <IndexPrice>3954.79</IndexPrice>
          <IndexRow>
            <Text $size={35} $color={colors.label}>上证</Text>
            <Text $size={38} $ml={45} $track={0.6}>-0.81%</Text>
          </IndexRow>
        </IndexPanel>
        <NavItem>
          <NavIcon>
            <path d="M-14 -23.500A27.500 27.500 0 0 1 25.500 10.500M14 23.500A27.500 27.500 0 0 1 -25.500 -10.500" />
            <path d="M-33 -8L-24 -15L-25.500 -9M33 8L24 15L25.500 9" />
            <path d="M-9 -14L0 -3L9 -14M0 -3V16M-11 -2H11M-11 7H11" />
          </NavIcon>
          交易
        </NavItem>
        <NavItem>
          <NavIcon>
            <path d="M10 -26H-20a6 6 0 0 0 -6 6V20a6 6 0 0 0 6 6H20a6 6 0 0 0 6 -6V-10" />
            <path d="M-7 7L20 -20" strokeWidth="5.500" />
            <path d="M21 -22L26 -26" strokeWidth="6" />
          </NavIcon>
          发帖
        </NavItem>
        <NavItem>
          <NavIcon>
            <rect x="-25" y="-25" width="22" height="22" rx="3" />
            <rect x="-25" y="3" width="22" height="22" rx="3" />
            <rect x="3" y="3" width="22" height="22" rx="3" />
            <path d="M14 -26L26 -13L14 -1L2 -13Z" strokeLinejoin="round" />
          </NavIcon>
          功能
        </NavItem>
        <NavItem>
          <NavIcon>
            <circle r="27" />
            <g fill="#666" stroke="none">
              <circle cx="-12" r="3.200" />
              <circle r="3.200" />
              <circle cx="12" r="3.200" />
            </g>
          </NavIcon>
          设自选
        </NavItem>
      </BottomNav>
    </Page>
  </>
);

export default App;
